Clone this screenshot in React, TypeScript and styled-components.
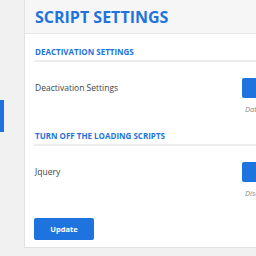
import React from "react";
import styled, { createGlobalStyle } from "styled-components";

const Global = createGlobalStyle`
  html, body { margin: 0; padding: 0; background: #f1f1f1; overflow: hidden; }
  body { font-family: "Open Sans", "Noto Sans", sans-serif; }
`;

const Page = styled.div`
  display: flex;
  align-items: flex-start;
  width: 360px;
  height: 256px;
`;

const Nav = styled.nav`
  width: 24px;
  flex: none;
  padding-top: 100px;
`;

const NavMarker = styled.div`
  width: 4px;
  height: 32px;
  background: #1e73de;
`;

const Panel = styled.section`
  flex: 1;
  background: #fff;
  border: 1px solid #e2e2e2;
  border-top: none;
  padding-bottom: 7px;
`;

const Header = styled.header`
  height: 33px;
  background: #f6f6f6;
  border-bottom: 1px solid #e6e6e6;
  display: flex;
  align-items: center;
  padding-left: 10px;
`;

const Title = styled.h1`
  margin: 0;
  font-size: 16px;
  font-weight: 700;
  color: #1e73de;
  letter-spacing: 0;
`;

const Body = styled.div`
  padding: 0 0 0 10px;
`;

const SectionHeading = styled.h2<{ $top: number }>`
  margin: ${(p) => p.$top}px 0 0 -1px;
  padding: 0 0 2px 1px;
  font-size: 8px;
  line-height: 12px;
  font-weight: 700;
  color: #1e73de;
  border-bottom: 2px solid #ededed;
`;

const Row = styled.div`
  display: grid;
  grid-template-columns: 207px auto;
  padding-top: 16px;
`;

const Label = styled.div`
  font-size: 8.5px;
  line-height: 20px;
  color: #3c434a;
`;

const Control = styled.div`
  display: flex;
  flex-direction: column;
  align-items: flex-start;
`;

const ActionButton = styled.button`
  width: 70px;
  height: 20px;
  border: none;
  border-radius: 2px;
  background: #1e73de;
  color: #fff;
  font-family: inherit;
  font-size: 8px;
  font-weight: 700;
  padding: 0;
`;

const Note = styled.div`
  margin-top: 4px;
  margin-left: 3px;
  font-size: 7.5px;
  line-height: 14px;
  font-style: italic;
  color: #8a8a8a;
  white-space: nowrap;
`;

const UpdateButton = styled.button`
  margin-top: 18px;
  margin-left: -1px;
  width: 60px;
  height: 22px;
  border: none;
  border-radius: 2px;
  background: #1e73de;
  color: #fff;
  font-family: inherit;
  font-size: 7.5px;
  font-weight: 700;
  padding: 0;
`;

export default function App() {
  return (
    <>
      <Global />
      <Page>
        <Nav>
          <NavMarker />
        </Nav>
        <Panel>
          <Header>
            <Title>SCRIPT SETTINGS</Title>
          </Header>
          <Body>
            <SectionHeading $top={12}>DEACTIVATION SETTINGS</SectionHeading>
            <Row>
              <Label>Deactivation Settings</Label>
              <Control>
                <ActionButton>Save</ActionButton>
                <Note>Data will be removed on deactivation</Note>
              </Control>
            </Row>
            <SectionHeading $top={14}>TURN OFF THE LOADING SCRIPTS</SectionHeading>
            <Row>
              <Label>Jquery</Label>
              <Control>
                <ActionButton>Off</ActionButton>
                <Note>Disable loading of Jquery</Note>
              </Control>
            </Row>
            <UpdateButton>Update</UpdateButton>
          </Body>
        </Panel>
      </Page>
    </>
  );
}
